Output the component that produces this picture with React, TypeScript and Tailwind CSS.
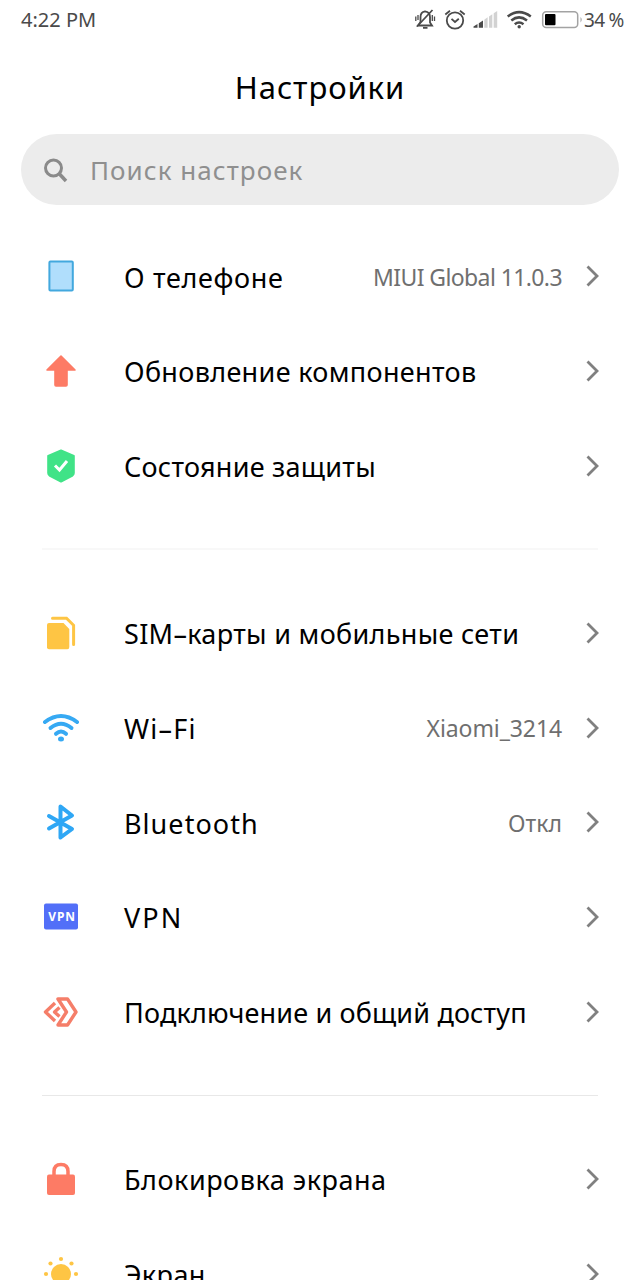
import type { ReactNode } from "react";

type Row = {
  icon: ReactNode;
  title: string;
  tracking: string;
  value?: string;
  valueTracking?: string;
};

const groups: Row[][] = [
  [
    {
      title: "О телефоне",
      tracking: "tracking-[0.68px]",
      value: "MIUI Global 11.0.3",
      valueTracking: "tracking-[-0.6px]",
      icon: <rect x="8.4" y="5.5" width="23.4" height="29" rx="1" fill="#b0defc" stroke="#42a8de" strokeWidth="2" />,
    },
    {
      title: "Обновление компонентов",
      tracking: "tracking-[0.34px]",
      icon: (
        <path
          d="M20 5 L34 19 H26 V34 Q26 35 25 35 H15 Q14 35 14 34 V19 H6 Z"
          fill="#fd7b65"
          stroke="#fd7b65"
          strokeWidth="1.6"
          strokeLinejoin="round"
        />
      ),
    },
    {
      title: "Состояние защиты",
      tracking: "tracking-[0.26px]",
      icon: (
        <>
          <path
            d="M20 4.5 L32.8 10 V27 Q32.8 28.5 31.5 29.5 L20 35.5 L8.5 29.5 Q7.2 28.5 7.2 27 V10 Z"
            fill="#40e387"
            stroke="#40e387"
            strokeWidth="2"
            strokeLinejoin="round"
          />
          <path d="M14 19.5 L18.5 24 L26 15" fill="none" stroke="#fff" strokeWidth="3" />
        </>
      ),
    },
  ],
  [
    {
      title: "SIM–карты и мобильные сети",
      tracking: "tracking-[0.32px]",
      icon: (
        <>
          <path d="M8 10 H22.5 L28.3 16 V34 Q28.3 36.3 26.3 36.3 H8 Q6 36.3 6 34.3 V12 Q6 10 8 10 Z" fill="#fec544" />
          <path d="M11.5 5.2 H25.5 L32.6 12.3 V31.5" fill="none" stroke="#fec544" strokeWidth="3" strokeLinecap="round" />
        </>
      ),
    },
    {
      title: "Wi–Fi",
      tracking: "tracking-[1.2px]",
      value: "Xiaomi_3214",
      valueTracking: "tracking-[-0.1px]",
      icon: (
        <>
          <g fill="none" stroke="#36a9f3" strokeWidth="4" strokeLinecap="round">
            <path d="M4 14 Q20 2 36 14" />
            <path d="M9.5 20 Q20 11.5 30.5 20" />
            <path d="M15 25.8 Q20 21.2 25 25.8" />
          </g>
          <ellipse cx="20" cy="31" rx="3" ry="2.5" fill="#36a9f3" />
        </>
      ),
    },
    {
      title: "Bluetooth",
      tracking: "tracking-[1.05px]",
      value: "Откл",
      icon: (
        <path
          d="M8 14 L31 27 L19.5 35.5 V4.5 L31 13.5 L8 26.5"
          fill="none"
          stroke="#2fa7f5"
          strokeWidth="4"
          strokeLinecap="round"
          strokeLinejoin="round"
        />
      ),
    },
    {
      title: "VPN",
      tracking: "tracking-[2.1px]",
      icon: (
        <>
          <rect x="3" y="6.5" width="34" height="26" rx="2" fill="#526ff8" />
          <text x="7.3" y="24" fill="#fff" fontSize="12" fontWeight="700" letterSpacing="0.8">
            VPN
          </text>
        </>
      ),
    },
    {
      title: "Подключение и общий доступ",
      tracking: "tracking-[0.16px]",
      icon: (
        <g fill="none" stroke="#f57e69" strokeWidth="3.4" strokeLinejoin="round">
          <path d="M17 7 H26.5 L35 20 L26.5 33 H17 L25.5 20 Z" />
          <path d="M14 11 L4.5 20 L14 29" />
          <path d="M18.5 15.5 L13.5 20 L18.5 24.5" />
        </g>
      ),
    },
  ],
  [
    {
      title: "Блокировка экрана",
      tracking: "tracking-[0.52px]",
      icon: (
        <>
          <rect x="6" y="15.5" width="28" height="20.5" rx="2" fill="#fd7b65" />
          <path d="M13 17 V12.5 Q13 5.5 20 5.5 Q27 5.5 27 12.5 V17" fill="none" stroke="#fd7b65" strokeWidth="3.5" />
        </>
      ),
    },
    {
      title: "Экран",
      tracking: "tracking-[0.4px]",
      icon: (
        <g fill="#fec544">
          <circle cx="20" cy="20" r="10" />
          <circle cx="20" cy="5" r="2.1" />
          <circle cx="9.5" cy="9.5" r="2.1" />
          <circle cx="30.5" cy="9.5" r="2.1" />
          <circle cx="5" cy="20" r="2.1" />
          <circle cx="35" cy="20" r="2.1" />
        </g>
      ),
    },
  ],
];

function StatusIcons() {
  return (
    <svg width="170" height="24" viewBox="414 8 170 24" fill="none" stroke="#4a4a4a" strokeWidth="1.8">
      {/* muted bell */}
      <path d="M418 25.5 H432 L430 22.5 V17 Q430 12 425 11.3 Q420.5 12 420.5 17 V22 Z" />
      <path d="M423 27.8 H427.5 M417 26.5 L432.5 10" />
      <path d="M415.8 16.5 V21 M418 15 V20 M432.3 15 V21 M434.5 16.5 V21" strokeWidth="1.3" />
      {/* alarm */}
      <circle cx="455" cy="20.5" r="8.2" />
      <path d="M451.5 18.8 L455 22 L458.8 18.8 M445.3 14.5 L450 10.8 M460 10.8 L464.7 14.5" />
      {/* signal */}
      <g stroke="none" fill="#4a4a4a">
        <path d="M473.5 27.7 V26.5 L477.5 24 V27.7 Z" />
        <path d="M478.8 27.7 V23.3 L483 20.5 V27.7 Z" />
        <g fill="#d2d2d2">
          <path d="M484.3 27.7 V19.7 L487.6 17.3 V27.7 Z" />
          <path d="M489 27.7 V16.5 L492.3 14.2 V27.7 Z" />
          <path d="M493.7 27.7 V13.3 L497.2 11 V27.7 Z" />
        </g>
      </g>
      {/* wi-fi */}
      <g strokeWidth="2.5">
        <path d="M507.7 16.5 Q519 7.8 530.8 16.5" />
        <path d="M511.3 20.5 Q519 14.3 527 20.5" />
        <path d="M514.8 24.3 Q519 20.7 523.5 24.3" />
      </g>
      <circle cx="519.2" cy="26.7" r="1.7" fill="#4a4a4a" stroke="none" />
      {/* battery */}
      <rect x="542.7" y="11.8" width="35" height="15.7" rx="3.5" stroke="#a3a3a3" strokeWidth="1.5" />
      <rect x="545" y="14" width="10.5" height="11.3" rx="1" fill="#000" stroke="none" />
      <path d="M580.5 17 Q583 19.7 580.5 22.5 Z" fill="#a3a3a3" stroke="none" />
    </svg>
  );
}

export default function App() {
  return (
    <div className="h-[1280px] w-[640px] overflow-hidden bg-white font-['Noto_Sans',sans-serif] text-black">
      <div className="flex h-10 items-center pl-[21px] text-[20px] text-[#4a4a4a]">
        <span className="w-[393px]">4:22 PM</span>
        <StatusIcons />
        <span className="whitespace-nowrap text-[19px] tracking-[-0.7px]">34 %</span>
      </div>
      <h1 className="flex h-[94px] items-center justify-center text-[31px] tracking-[0.9px]">Настройки</h1>
      <div className="mx-[21px] flex h-[71px] items-center rounded-full bg-[#ececec] pl-[22px] text-[26px] tracking-[1.05px] text-[#8f8f8f]">
        <svg width="25" height="26" viewBox="0 0 25 26" fill="none" stroke="#8a8a8a" strokeWidth="3">
          <circle cx="10.5" cy="11" r="8" />
          <path d="M16.5 17 L23 24" strokeWidth="3.5" />
        </svg>
        <span className="ml-[22px] pt-0.5">Поиск настроек</span>
      </div>
      <div className="mt-[24px]">
        {groups.map((rows, i) => (
          <div key={i}>
            {i > 0 && (
              <div className="mx-[42px] flex h-[72.25px] items-center">
                <div className={i === 1 ? "h-0.5 w-full bg-[#f8f8f8]" : "h-px w-full bg-[#e8e8e8]"} />
              </div>
            )}
            {rows.map((row) => (
              <div key={row.title} className="flex h-[94.75px] items-center px-[41px]">
                <svg width="40" height="40" viewBox="0 0 40 40">
                  {row.icon}
                </svg>
                <span className={`ml-[43px] flex-1 whitespace-nowrap pt-[2.8px] text-[27px] ${row.tracking}`}>{row.title}</span>
                {row.value && (
                  <span className={`mr-6 pt-[1.8px] text-[23px] text-[#6f6f6f] ${row.valueTracking ?? ""}`}>{row.value}</span>
                )}
                <svg width="13" height="22" viewBox="0 0 13 22" fill="none" stroke="#808080" strokeWidth="2.8">
                  <path d="M1.5 1.5 L11 11 L1.5 20.5" />
                </svg>
              </div>
            ))}
          </div>
        ))}
      </div>
    </div>
  );
}
